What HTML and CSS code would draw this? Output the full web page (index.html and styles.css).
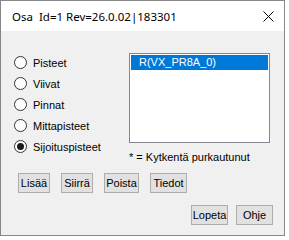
FILE: index.html
```html
<!DOCTYPE html>
<html lang="fi">
<head>
  <meta charset="UTF-8">
  <title>Osa</title>
  <link rel="stylesheet" href="styles.css">
</head>
<body>
  <div class="window">
    <div class="titlebar">
      <span class="title">Osa  Id=1 Rev=26.0.02|183301</span>
      <svg class="close" width="11" height="11" viewBox="0 0 11 11">
        <path d="M0.5 0.5 L10.5 10.5 M10.5 0.5 L0.5 10.5" stroke="#000" stroke-width="1" fill="none"/>
      </svg>
    </div>

    <div class="content">
      <div class="main">
        <!-- Tyyppivalinta -->
        <div class="radios">
          <label class="radio"><span class="dot"></span>Pisteet</label>
          <label class="radio"><span class="dot"></span>Viivat</label>
          <label class="radio"><span class="dot"></span>Pinnat</label>
          <label class="radio"><span class="dot"></span>Mittapisteet</label>
          <label class="radio checked"><span class="dot"></span>Sijoituspisteet</label>
        </div>

        <div class="list-col">
          <div class="listbox">
            <div class="item selected">R(VX_PR8A_0)</div>
          </div>
          <div class="note">* = Kytkentä purkautunut</div>
        </div>
      </div>

      <div class="actions">
        <button class="btn w-lisaa">Lisää</button>
        <button class="btn w-siirra">Siirrä</button>
        <button class="btn w-poista">Poista</button>
        <button class="btn w-tiedot">Tiedot</button>
      </div>

      <div class="footer">
        <button class="btn w-foot">Lopeta</button>
        <button class="btn w-foot">Ohje</button>
      </div>
    </div>
  </div>
</body>
</html>
```

FILE: styles.css
```css
* {
  margin: 0;
  padding: 0;
  box-sizing: border-box;
}

body {
  background: #fff;
  font-family: "Liberation Sans", Arial, sans-serif;
  font-size: 11px;
  color: #000;
}

.window {
  width: 285px;
  height: 236px;
  border: 1px solid #888;
  background: #f0f0f0;
  display: flex;
  flex-direction: column;
}

.titlebar {
  height: 30px;
  background: #fff;
  display: flex;
  align-items: center;
  justify-content: space-between;
  padding: 0 10px 0 11px;
}

.title {
  font-family: "Noto Sans", sans-serif;
  font-size: 11.5px;
  white-space: pre;
  padding-top: 1px;
}

.close {
  margin-top: 1px;
}

.content {
  flex: 1;
  padding: 22px 11px 0 12px;
}

.main {
  display: flex;
}

.radios {
  width: 116px;
  display: flex;
  flex-direction: column;
  margin-top: -1px;
}

.radio {
  height: 21px;
  display: flex;
  align-items: center;
  gap: 6px;
  padding-left: 1px;
}

.dot {
  width: 13px;
  height: 13px;
  border: 1px solid #333;
  border-radius: 50%;
  background: #fff;
  display: flex;
  align-items: center;
  justify-content: center;
}

.radio.checked .dot::after {
  content: "";
  width: 7px;
  height: 7px;
  border-radius: 50%;
  background: #1a1a1a;
}

.list-col {
  width: 141px;
}

.listbox {
  height: 90px;
  border: 1px solid #828790;
  background: #fff;
  padding: 1px;
}

.item {
  height: 15px;
  line-height: 15px;
  padding-left: 8px;
}

.item.selected {
  background: #0078d7;
  color: #fff;
}

.note {
  margin-top: 8px;
  line-height: 13px;
}

.actions {
  display: flex;
  gap: 11px;
  margin: 9px 0 0 5px;
}

.btn {
  height: 20px;
  font-family: "Liberation Sans", Arial, sans-serif;
  font-size: 11px;
  color: #000;
  background: #e1e1e1;
  border: 1px solid #adadad;
  padding: 0;
}

.w-lisaa { width: 32px; }
.w-siirra { width: 32px; }
.w-poista { width: 35px; }
.w-tiedot { width: 37px; }
.w-foot { width: 37px; }

.footer {
  display: flex;
  justify-content: flex-end;
  gap: 8px;
  margin-top: 12px;
}
```
